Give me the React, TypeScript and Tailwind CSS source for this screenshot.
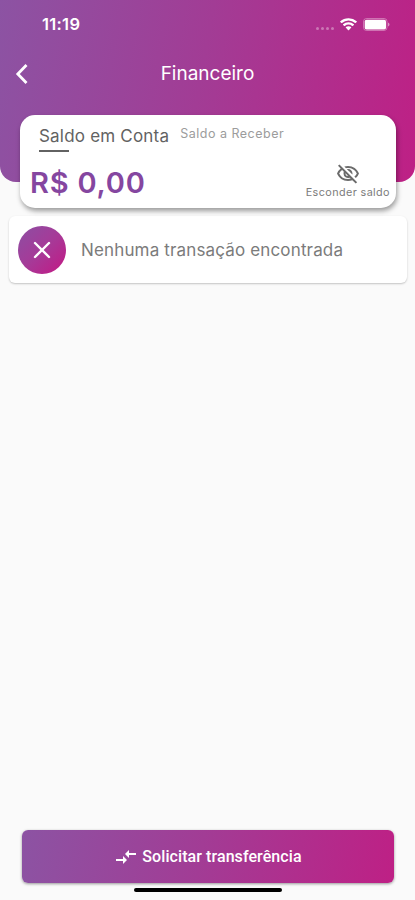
import { MdCompareArrows, MdOutlineVisibilityOff } from "react-icons/md";

function StatusBar() {
  return (
    <div className="flex h-12 items-center justify-between pr-[25px] pl-[42px]">
      <span className="text-[16.5px] font-semibold tracking-[0.3px]">11:19</span>
      <div className="flex items-center">
        <div className="mt-[9px] mr-[6px] flex gap-[2px] opacity-35">
          <span className="size-[3px] rounded-full bg-white" />
          <span className="size-[3px] rounded-full bg-white" />
          <span className="size-[3px] rounded-full bg-white" />
          <span className="size-[3px] rounded-full bg-white" />
        </div>
        <svg width="17" height="13" viewBox="0 0 17 13" fill="currentColor">
          <path d="M8.5.2C5.3.2 2.4 1.4.3 3.3a.5.5 0 0 0 0 .7l1.1 1.1c.2.2.4.2.6 0a9.5 9.5 0 0 1 13 0c.2.2.4.2.6 0L16.7 4a.5.5 0 0 0 0-.7A11.9 11.9 0 0 0 8.5.2Z" />
          <path d="M8.5 4.2C6.4 4.2 4.5 5 3.1 6.2a.5.5 0 0 0 0 .7L4.3 8c.2.2.4.2.6 0a5.3 5.3 0 0 1 7.2 0c.2.2.4.2.6 0l1.2-1.1a.5.5 0 0 0 0-.7A7.9 7.9 0 0 0 8.5 4.2Z" />
          <path d="M8.5 8.2c-1 0-1.9.4-2.600.9a.4.4 0 0 0 0 .6l2.300 2.500c.2.200.4.200.6 0l2.300-2.500a.4.4 0 0 0 0-.6c-.7-.5-1.600-.9-2.600-.9Z" />
        </svg>
        <svg className="ml-[6px]" width="27" height="13" viewBox="0 0 27 13">
          <rect x="0.5" y="0.5" width="23.5" height="12" rx="3" fill="none" stroke="white" strokeOpacity="0.35" />
          <rect x="1.7" y="1.7" width="21.3" height="9.8" rx="1.8" fill="white" />
          <path d="M25 4.5c1.2.5 1.5 1.2 1.5 2s-.3 1.5-1.5 2Z" fill="white" fillOpacity="0.5" />
        </svg>
      </div>
    </div>
  );
}

function Header() {
  return (
    <header className="h-[182px] rounded-b-[16px] bg-linear-[100deg,#8c53a3_0%,#a23c95_48%,#be2085_100%] text-white">
      <StatusBar />
      <div className="grid h-[51px] grid-cols-[60px_1fr_60px] items-center">
        <svg className="ml-[15px]" width="14" height="22" viewBox="0 0 14 22" fill="none" stroke="currentColor" strokeWidth="2.8">
          <path d="M11.5 2 2.8 11l8.7 9" />
        </svg>
        <h1 className="pt-[2px] text-center text-[19px] font-normal">Financeiro</h1>
      </div>
    </header>
  );
}

function BalanceCard() {
  return (
    <section className="relative mr-[19px] ml-5 -mt-[67px] h-[93px] rounded-[15px] bg-white shadow-[1px_3px_5px_rgba(0,0,0,0.38)]">
      <div className="flex pt-[9px] pl-[19px] whitespace-nowrap">
        <div>
          <p className="text-[17px] leading-[24px] tracking-[0.2px] text-[#626262]">Saldo em Conta</p>
          <div className="mt-[2px] h-[2px] w-[30px] bg-[#626262]" />
        </div>
        <p className="ml-[11px] text-[12.5px] leading-[19px] tracking-[0.5px] text-[#9c9c9c]">
          Saldo a Receber
        </p>
      </div>
      <div className="flex justify-between pr-[6px] pl-[10px] whitespace-nowrap">
        <p className="mt-[12px] text-[29px] leading-[37px] font-semibold tracking-[0.8px] text-[#8546a0]">
          R$ 0,00
        </p>
        <div className="mt-[10px] flex flex-col items-center text-[#6b6b6b]">
          <MdOutlineVisibilityOff className="size-6" />
          <span className="text-[10.8px] leading-[13px] tracking-[0.4px] text-[#7c7c7c]">
            Esconder saldo
          </span>
        </div>
      </div>
    </section>
  );
}

function EmptyTransactions() {
  return (
    <section className="mt-2 mr-2 ml-[9px] flex h-[67px] items-center rounded-[6px] bg-white pl-[9px] shadow-[0_1px_2px_rgba(0,0,0,0.22)]">
      <div className="flex size-12 items-center justify-center rounded-full bg-linear-[135deg,#8c4fa3_0%,#a63a98_50%,#c41783_100%] text-white">
        <svg width="18" height="18" viewBox="0 0 18 18" fill="none" stroke="currentColor" strokeWidth="2.4" strokeLinecap="round">
          <path d="m2 2 14 14M16 2 2 16" />
        </svg>
      </div>
      <p className="mt-[2px] ml-[15px] text-[17px] tracking-[0.15px] whitespace-nowrap text-[#7b7b7b]">
        Nenhuma transação encontrada
      </p>
    </section>
  );
}

export default function App() {
  return (
    <main className="flex h-[900px] w-full flex-col overflow-hidden bg-[#fafafa] font-['Inter',sans-serif]">
      <Header />
      <BalanceCard />
      <EmptyTransactions />
      <footer className="mt-auto flex flex-col">
        <button className="mr-[21px] ml-[22px] flex h-[53px] items-center justify-center gap-1 rounded-[6px] bg-linear-[100deg,#8c53a3_0%,#a23c95_48%,#be2085_100%] font-['Roboto',sans-serif] text-[16px] font-medium tracking-[0.08px] whitespace-nowrap text-white shadow-[0_1px_3px_rgba(0,0,0,0.4)]">
          <MdCompareArrows className="size-6" />
          Solicitar transferência
        </button>
        <div className="mt-[5px] mb-2 ml-[134px] h-1 w-[148px] rounded-full bg-black" />
      </footer>
    </main>
  );
}
